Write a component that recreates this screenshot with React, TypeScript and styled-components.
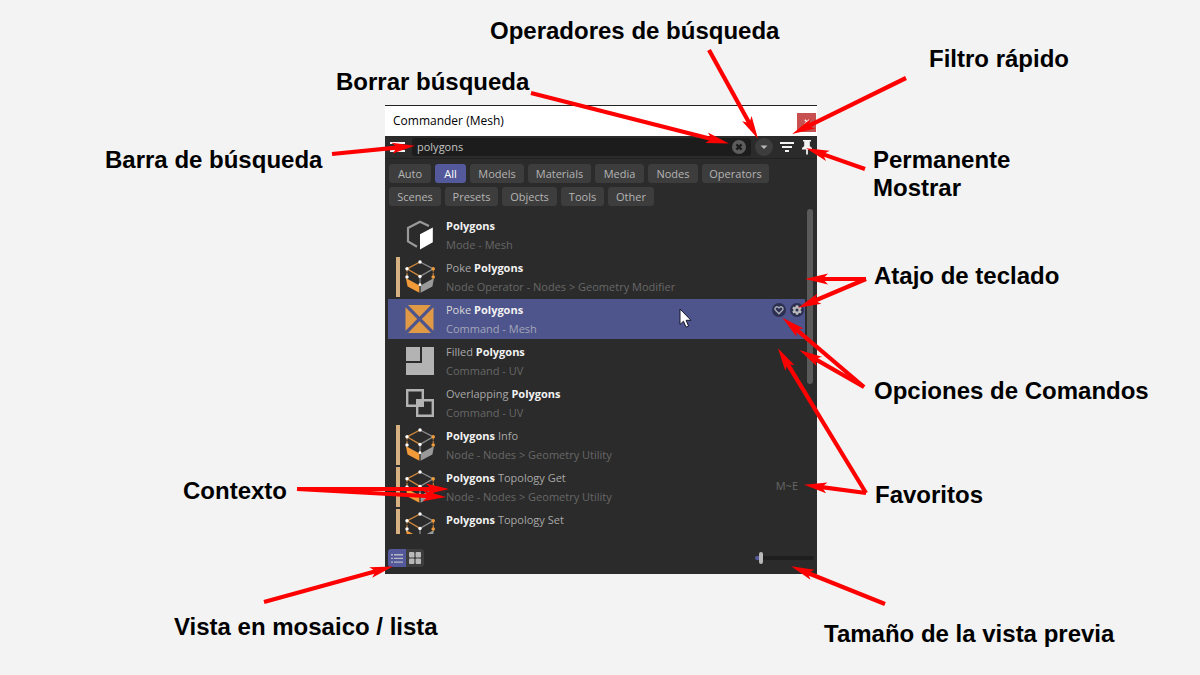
import React from "react";
import styled, { createGlobalStyle } from "styled-components";

const GlobalStyle = createGlobalStyle`
  *, *::before, *::after { box-sizing: border-box; }
  body {
    margin: 0;
    background: #f3f3f3;
    font-family: "Open Sans", "Noto Sans", sans-serif;
  }
`;

/* ---------- page ---------- */

const Page = styled.main`
  display: flex;
  justify-content: center;
  min-height: 100vh;
  padding: 105px 0 40px 2px;
  overflow: hidden;
`;

const Diagram = styled.div`
  position: relative;
  width: 432px;
`;

/* ---------- annotations, placed from the window's top left corner ---------- */

const ArrowLayer = styled.svg`
  position: absolute;
  top: 0;
  left: 0;
  width: 100%;
  height: 100%;
  overflow: visible;
  pointer-events: none;
`;

const Callout = styled.p<{ $x: number; $y: number }>`
  position: absolute;
  left: ${(p) => p.$x}px;
  top: ${(p) => p.$y}px;
  margin: 0;
  font: bold 24px/28px "Liberation Sans", Arial, sans-serif;
  color: #000;
  white-space: pre;
`;

/* ---------- window ---------- */

const Window = styled.section`
  background: #2b2b2b;
  border-top: 1px solid #222;
  color: #b8b8b8;
  font-size: 11px;
`;

const TitleBar = styled.header`
  display: flex;
  align-items: center;
  justify-content: space-between;
  height: 30px;
  padding: 0 1px 0 8px;
  background: #fff;
`;

const Title = styled.h1`
  margin: 0;
  font-size: 12px;
  line-height: 18px;
  font-weight: 400;
  color: #000;
`;

const CloseButton = styled.button`
  display: grid;
  place-items: center;
  width: 19px;
  height: 19px;
  margin-top: 2px;
  padding: 0;
  border: 0;
  background: #c75050;
`;

const SearchRow = styled.div`
  display: flex;
  align-items: center;
  height: 23px;
  padding: 0 4px 0 5px;
  border-bottom: 1px solid #222;
`;

const IconButton = styled.button`
  display: grid;
  place-items: center;
  padding: 0;
  border: 0;
  background: none;
`;

const SearchField = styled.div`
  display: flex;
  flex: 1;
  align-items: center;
  height: 18px;
  margin: 0 4px 0 7px;
  padding: 0 5px;
  border-radius: 3px;
  background: #1c1c1c;
`;

const SearchInput = styled.input`
  flex: 1;
  min-width: 0;
  padding: 0;
  border: 0;
  outline: 0;
  background: none;
  color: #c4c4c4;
  font: inherit;
  line-height: 18px;
`;

const Tools = styled.div`
  display: flex;
  align-items: center;
  gap: 7px;
`;

const Chips = styled.nav`
  display: flex;
  flex-wrap: wrap;
  gap: 4px;
  padding: 5px 4px 3px;
`;

const Chip = styled.button<{ $width: number; $active?: boolean }>`
  width: ${(p) => p.$width}px;
  height: 19px;
  padding: 0;
  border: 0;
  border-radius: 3px;
  background: ${(p) => (p.$active ? "#53599b" : "#3d3d3d")};
  color: ${(p) => (p.$active ? "#fff" : "#b4b4b4")};
  font: inherit;
  line-height: 19px;
  text-align: center;
`;

const Results = styled.div`
  display: flex;
  gap: 2px;
  height: 325px;
  padding: 0 4px 0 3px;
  overflow: hidden;
`;

const List = styled.ul`
  display: flex;
  flex: 1;
  flex-direction: column;
  gap: 2px;
  margin: 0;
  padding: 6px 0 0;
  list-style: none;
  overflow: hidden;
`;

const Row = styled.li<{ $selected?: boolean }>`
  display: flex;
  flex: none;
  align-items: center;
  height: 40px;
  padding-left: 8px;
  background: ${(p) => (p.$selected ? "#4e548c" : "none")};
  color: ${(p) => (p.$selected ? "#d8d8d8" : "#a8a8a8")};
`;

const NodeBar = styled.span<{ $visible?: boolean }>`
  width: 4px;
  height: 40px;
  margin-right: 5px;
  background: ${(p) => (p.$visible ? "#d8b183" : "none")};
`;

const RowIcon = styled.span`
  display: grid;
  place-items: center start;
  width: 30px;
  margin-right: 11px;
`;

const RowText = styled.div`
  flex: 1;
  align-self: flex-start;
  padding-top: 1px;
  line-height: 19px;
`;

const RowTitle = styled.div`
  b {
    font-weight: 700;
    color: #f2f2f2;
  }
`;

const RowContext = styled.div<{ $selected?: boolean }>`
  color: ${(p) => (p.$selected ? "#a3a6b8" : "#676767")};
`;

const RowActions = styled.div`
  display: flex;
  align-self: flex-start;
  gap: 4px;
  padding: 4px 1px 0 0;
`;

const Shortcut = styled.kbd`
  align-self: flex-start;
  padding: 11px 7px 0 0;
  font: inherit;
  color: #676767;
`;

const ScrollThumb = styled.div`
  width: 6px;
  height: 175px;
  border-radius: 3px;
  background: #5a5a5a;
`;

const Footer = styled.footer`
  display: flex;
  align-items: flex-start;
  justify-content: space-between;
  height: 40px;
  padding: 15px 3px 0;
`;

const ViewToggle = styled.div`
  display: flex;
  border-radius: 3px;
  background: #3d3d3d;
  overflow: hidden;
`;

const ViewButton = styled(IconButton)<{ $active?: boolean }>`
  width: 18px;
  height: 18px;
  background: ${(p) => (p.$active ? "#53599b" : "none")};
`;

const SizeSlider = styled.input`
  appearance: none;
  width: 59px;
  height: 18px;
  margin: 0;
  background: none;

  &::-webkit-slider-runnable-track {
    height: 4px;
    border-radius: 2px;
    background: linear-gradient(90deg, #53599b 5px, #1e1e1e 5px);
  }

  &::-webkit-slider-thumb {
    appearance: none;
    width: 4px;
    height: 12px;
    margin-top: -4px;
    border-radius: 2px;
    background: #b8b8b8;
  }
`;

const Pointer = styled.svg`
  position: absolute;
  left: 294px;
  top: 203px;
  pointer-events: none;
`;

/* ---------- row icons ---------- */

const MeshIcon = () => (
  <svg width="30" height="30" viewBox="0 0 30 30">
    <path d="M24 6 15 1.8 3 8v13.4l9 5.4" fill="none" stroke="#999" strokeWidth="2.2" />
    <path d="M15 14.3 27.8 7.5V22.3L15 29.6Z" fill="#fff" />
  </svg>
);

const NodeIcon = () => (
  <svg width="30" height="34" viewBox="0 0 30 34">
    <path d="M.8 18 14.4 25.4V32.8L2.6 26.4Z" fill="#f09a3a" />
    <path d="M29 18 15.6 25.4V32.8L27.4 26.4Z" fill="#999" />
    <g fill="none" strokeWidth="1.3">
      <path d="M15 2 2 8.8 15 16.4" stroke="#cf883a" />
      <path d="M15 2 28.3 8.8 15 16.4" stroke="#8b8b8b" />
      <path d="M2 8.8V17M28.3 8.8V17" stroke="#b5783a" strokeDasharray="3 1" />
      <path d="M15 16.4V24.7" stroke="#8b8b8b" />
    </g>
    <g fill="#fff">
      <circle cx="15" cy="2" r="1.7" />
      <circle cx="2" cy="8.8" r="1.7" />
      <circle cx="15" cy="16.4" r="1.7" />
      <circle cx="2" cy="17" r="1.7" />
      <circle cx="15" cy="24.7" r="1.4" />
    </g>
    <g fill="#f09a3a">
      <circle cx="28.2" cy="8.8" r="1.8" />
      <circle cx="28.2" cy="17" r="1.8" />
    </g>
  </svg>
);

const PokeIcon = () => (
  <svg width="29" height="28" viewBox="0 0 29 28">
    <g fill="#e09a45">
      <path d="M3 0H26L14.5 11.7Z" />
      <path d="M3 28H26L14.5 16.3Z" />
      <path d="M.5 2.2V25.8L12.2 14Z" />
      <path d="M28.5 2.2V25.8L16.8 14Z" />
    </g>
  </svg>
);

const FilledIcon = () => (
  <svg width="29" height="28" viewBox="0 0 29 28">
    <path d="M1 0H15V14H1ZM17 0H29V28H1V16H17Z" fill="#b3b3b3" />
  </svg>
);

const OverlapIcon = () => (
  <svg width="29" height="28" viewBox="0 0 29 28">
    <path
      d="M2.2 1.2H17.8V16.8H2.2ZM12.2 11.2H27.8V26.8H12.2Z"
      fill="none"
      stroke="#b3b3b3"
      strokeWidth="2.4"
    />
    <path d="M11 10H19V18H11Z" fill="#b3b3b3" />
  </svg>
);

/* ---------- data ---------- */

const filters = [
  { name: "Auto", width: 42 },
  { name: "All", width: 31 },
  { name: "Models", width: 54 },
  { name: "Materials", width: 63 },
  { name: "Media", width: 49 },
  { name: "Nodes", width: 50 },
  { name: "Operators", width: 67 },
  { name: "Scenes", width: 52 },
  { name: "Presets", width: 53 },
  { name: "Objects", width: 55 },
  { name: "Tools", width: 43 },
  { name: "Other", width: 46 },
];

type Result = {
  title: string;
  context?: string;
  icon: React.FC;
  node?: boolean;
  selected?: boolean;
  shortcut?: string;
};

const results: Result[] = [
  { title: "Polygons", context: "Mode - Mesh", icon: MeshIcon },
  { title: "Poke Polygons", context: "Node Operator - Nodes > Geometry Modifier", icon: NodeIcon, node: true },
  { title: "Poke Polygons", context: "Command - Mesh", icon: PokeIcon, selected: true },
  { title: "Filled Polygons", context: "Command - UV", icon: FilledIcon },
  { title: "Overlapping Polygons", context: "Command - UV", icon: OverlapIcon },
  { title: "Polygons Info", context: "Node - Nodes > Geometry Utility", icon: NodeIcon, node: true },
  { title: "Polygons Topology Get", context: "Node - Nodes > Geometry Utility", icon: NodeIcon, node: true, shortcut: "M~E" },
  { title: "Polygons Topology Set", icon: NodeIcon, node: true },
];

const callouts = [
  { text: "Operadores de búsqueda", x: 105, y: -88 },
  { text: "Borrar búsqueda", x: -49, y: -37 },
  { text: "Filtro rápido", x: 544, y: -60 },
  { text: "Barra de búsqueda", x: -280, y: 41 },
  { text: "Permanente\nMostrar", x: 488, y: 41 },
  { text: "Atajo de teclado", x: 489, y: 157 },
  { text: "Opciones de Comandos", x: 489, y: 272 },
  { text: "Favoritos", x: 490, y: 376 },
  { text: "Contexto", x: -202, y: 372 },
  { text: "Vista en mosaico / lista", x: -211, y: 508 },
  { text: "Tamaño de la vista previa", x: 439, y: 515 },
];

/* start x, start y, tip x, tip y */
const arrows = [
  [-53, 49, 28, 41],
  [146, -12, 342, 38],
  [324, -55, 372, 32],
  [521, -27, 409, 28],
  [480, 64, 423, 44],
  [481, 174, 422, 174],
  [481, 174, 415, 202],
  [479, 282, 399, 214],
  [479, 282, 416, 246],
  [481, 388, 394, 245],
  [481, 388, 421, 380],
  [-88, 384, 62, 384],
  [-88, 384, 59, 392],
  [-121, 497, 6, 462],
  [500, 499, 408, 462],
];

function Arrow({ points }: { points: number[] }) {
  const [x1, y1, x2, y2] = points;
  const length = Math.hypot(x2 - x1, y2 - y1);
  const angle = (Math.atan2(y2 - y1, x2 - x1) * 180) / Math.PI;
  return (
    <g transform={`translate(${x2} ${y2}) rotate(${angle})`} fill="#f00">
      <path d={`M${-length} -2.1H-14V2.1H${-length}Z`} />
      <path d="M2 0-21 5.4-16 0-21-5.4Z" />
    </g>
  );
}

const highlight = (title: string) =>
  title.split(/(Polygons)/).map((part, i) => (part === "Polygons" ? <b key={i}>{part}</b> : part));

export default function App() {
  return (
    <Page>
      <GlobalStyle />
      <Diagram>
        <Window>
          <TitleBar>
            <Title>Commander (Mesh)</Title>
            <CloseButton aria-label="Close">
              <svg width="6" height="6" viewBox="0 0 6 6" stroke="#fff" strokeWidth="1.4">
                <path d="M.8 .8 5.2 5.2M5.2 .8 .8 5.2" />
              </svg>
            </CloseButton>
          </TitleBar>

          <SearchRow>
            <IconButton aria-label="Menu">
              <svg width="15" height="12" viewBox="0 0 15 12" fill="#f2f2f2">
                <path d="M0 1H15V3H0ZM0 5H15V7H0ZM0 9H15V11H0Z" />
              </svg>
            </IconButton>
            <SearchField>
              <SearchInput aria-label="Search" defaultValue="polygons" />
              <IconButton aria-label="Clear search">
                <svg width="14" height="14" viewBox="0 0 14 14">
                  <circle cx="7" cy="7" r="7" fill="#5c5c5c" />
                  <path d="M4.4 4.4 9.6 9.6M9.6 4.4 4.4 9.6" stroke="#1c1c1c" strokeWidth="2.2" />
                </svg>
              </IconButton>
            </SearchField>
            <Tools>
              <IconButton aria-label="Search operators">
                <svg width="18" height="18" viewBox="0 0 18 18">
                  <circle cx="9" cy="9" r="9" fill="#3d3d3d" />
                  <path d="M5.5 7.5H12.5L9 11Z" fill="#b8b8b8" />
                </svg>
              </IconButton>
              <IconButton aria-label="Quick filter">
                <svg width="14" height="12" viewBox="0 0 14 12" fill="#f2f2f2">
                  <path d="M0 1H14V3H0ZM2 5H12V7H2ZM5 9H9V11H5Z" />
                </svg>
              </IconButton>
              <IconButton aria-label="Keep visible">
                <svg width="12" height="16" viewBox="0 0 12 16" fill="#f2f2f2">
                  <path d="M2 1H10V2.6H8.8V7L11 9V10.4H6.9V15.4H5.1V10.4H1V9L3.2 7V2.6H2Z" />
                </svg>
              </IconButton>
            </Tools>
          </SearchRow>

          <Chips aria-label="Categories">
            {filters.map(({ name, width }) => (
              <Chip key={name} $width={width} $active={name === "All"}>{name}</Chip>
            ))}
          </Chips>

          <Results>
            <List>
              {results.map(({ title, context, icon: Icon, node, selected, shortcut }) => (
                <Row key={title + context} $selected={selected}>
                  <NodeBar $visible={node} />
                  <RowIcon><Icon /></RowIcon>
                  <RowText>
                    <RowTitle>{highlight(title)}</RowTitle>
                    {context && <RowContext $selected={selected}>{context}</RowContext>}
                  </RowText>
                  {shortcut && <Shortcut>{shortcut}</Shortcut>}
                  {selected && (
                    <RowActions>
                      <IconButton aria-label="Favorite">
                        <svg width="14" height="14" viewBox="0 0 14 14">
                          <circle cx="7" cy="7" r="7" fill="#2c3050" />
                          <path
                            d="M7 10.8 3.6 7.3A2 2 0 0 1 6.4 4.4L7 5 7.6 4.4A2 2 0 0 1 10.4 7.3Z"
                            fill="none"
                            stroke="#a9abb8"
                            strokeWidth="1.3"
                          />
                        </svg>
                      </IconButton>
                      <IconButton aria-label="Command options">
                        <svg width="14" height="14" viewBox="0 0 14 14">
                          <circle cx="7" cy="7" r="7" fill="#2c3050" />
                          <circle cx="7" cy="7" r="2.6" fill="none" stroke="#b8b8b8" strokeWidth="2.2" />
                          <path
                            d="M7 2.2V4.4M7 9.6V11.8M2.8 4.6 4.7 5.7M9.3 8.3 11.2 9.4M2.8 9.4 4.7 8.3M9.3 5.7 11.2 4.6"
                            stroke="#b8b8b8"
                            strokeWidth="2.3"
                          />
                        </svg>
                      </IconButton>
                    </RowActions>
                  )}
                </Row>
              ))}
            </List>
            <ScrollThumb />
          </Results>

          <Footer>
            <ViewToggle>
              <ViewButton $active aria-label="List view">
                <svg width="12" height="9" viewBox="0 0 12 9" fill="#b8b8c4">
                  <path d="M0 0H2V1.4H0ZM3 0H12V1.4H3ZM0 3.7H2V5.1H0ZM3 3.7H12V5.1H3ZM0 7.4H2V8.8H0ZM3 7.4H12V8.8H3Z" />
                </svg>
              </ViewButton>
              <ViewButton aria-label="Tile view">
                <svg width="12" height="12" viewBox="0 0 12 12" fill="#b8b8b8">
                  <rect x="0" y="0" width="5.4" height="5.4" rx="1" />
                  <rect x="6.6" y="0" width="5.4" height="5.4" rx="1" />
                  <rect x="0" y="6.6" width="5.4" height="5.4" rx="1" />
                  <rect x="6.6" y="6.6" width="5.4" height="5.4" rx="1" />
                </svg>
              </ViewButton>
            </ViewToggle>
            <SizeSlider type="range" min={0} max={100} defaultValue={7} aria-label="Preview size" />
          </Footer>
        </Window>

        <Pointer width="13" height="21" viewBox="0 0 13 21">
          <path
            d="M1 1V16.5L4.5 13.2 7 19.2 9.6 18.1 7.1 12.3H12Z"
            fill="#fff"
            stroke="#15172c"
            strokeWidth="1"
          />
        </Pointer>

        <ArrowLayer>
          {arrows.map((a) => (
            <Arrow key={a.join()} points={a} />
          ))}
        </ArrowLayer>
        {callouts.map(({ text, x, y }) => (
          <Callout key={text} $x={x} $y={y}>{text}</Callout>
        ))}
      </Diagram>
    </Page>
  );
}
